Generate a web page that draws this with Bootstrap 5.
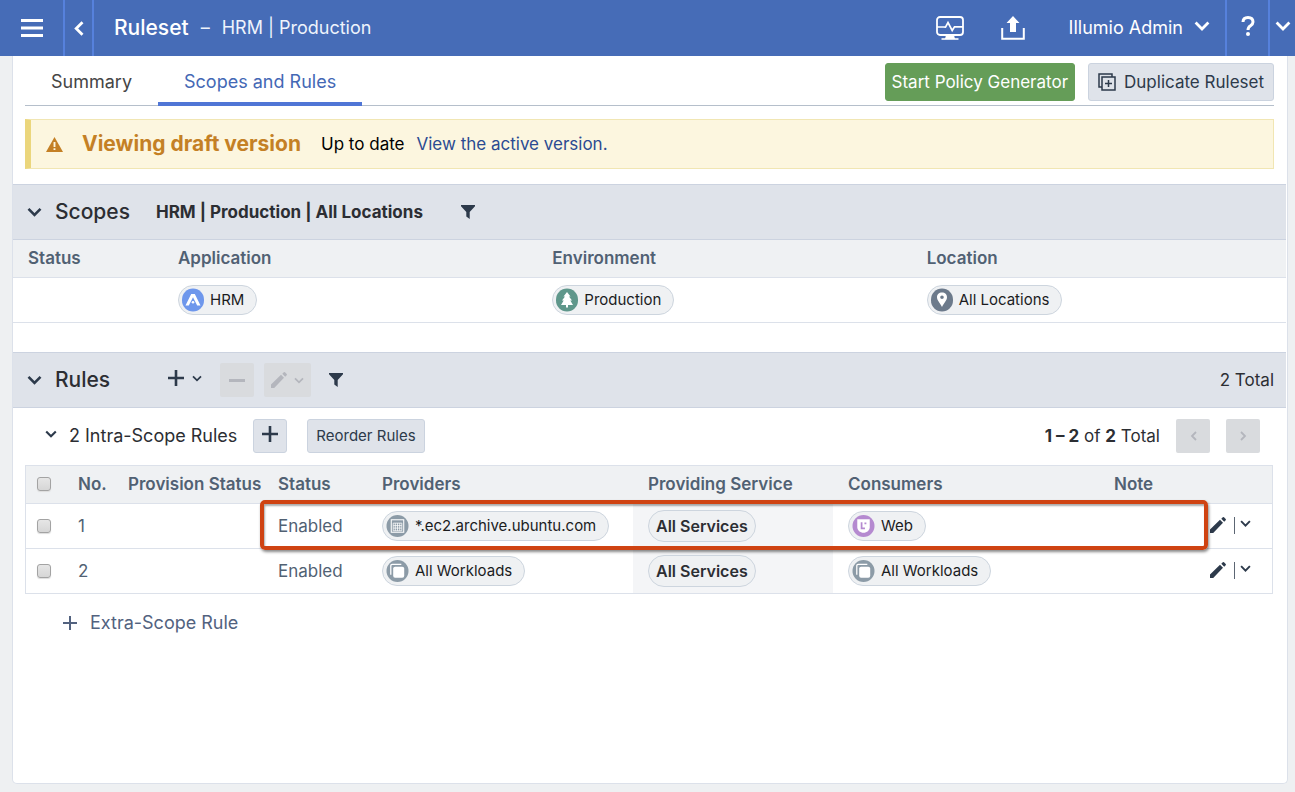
<!DOCTYPE html>
<html lang="en">
<head>
<meta charset="utf-8">
<meta name="viewport" content="width=device-width, initial-scale=1">
<title>Ruleset – HRM | Production</title>
<link href="https://cdn.jsdelivr.net/npm/bootstrap@5.3.0/dist/css/bootstrap.min.css" rel="stylesheet">
<style>
  :root { --ink: #2d3a4b; --slate: #516173; --line: #dce1ea; --bar: #dfe3ea; --soft: #eff1f3; --blue: #466cb7; }
  body { font-family: Inter, "Liberation Sans", sans-serif; font-size: 17px; line-height: 24px; color: #2c2e33; background: #eef0f2; }
  svg { display: block; flex: none; }
  .icon-btn { background: none; border: 0; padding: 0; display: flex; align-items: center; justify-content: center; color: var(--ink); }
  .topbar { background: var(--blue); height: 56px; color: #fff; }
  .topbar .icon-btn { color: #fff; }
  .topbar .cell-line { border-left: 2px solid #5681dc; }
  .menu-btn { width: 63px; }
  .back-btn { width: 29px; }
  .help-btn { width: 43px; }
  .more-btn { width: 27px; }
  .health-btn { margin-right: 37px; }
  .provision-btn { margin-right: 44px; }
  .user-btn { font-size: 18px; gap: 11px; margin-right: 15px; }
  .page-title { font-size: 21px; font-weight: 500; }
  .page-sub { font-size: 18px; color: #eef3fc; }
  .panel { background: #fff; border: 1px solid var(--line); border-top: 0; border-radius: 0 0 5px 5px; margin: 0 7px 8px 12px; min-height: calc(100vh - 64px); }
  .tabs-row { border-bottom: 1px solid #b5bfcb; height: 50px; margin: 0 13px 0 12px; }
  .tab-link { color: #454545; text-decoration: none; font-size: 18px; padding: 14px 26px 8px; height: 50px; border-bottom: 4px solid transparent; }
  .tab-link.on { color: #4468b5; border-color: #5076d6; }
  .act { height: 38px; border-radius: 3px; border: 1px solid #cbd3df; background: var(--bar); color: var(--ink); padding: 0 9px; }
  .act.go { background: #659d58; border-color: #659d58; color: #fff; padding: 0 6px; }
  .tab-actions { gap: 13px; padding-top: 7px; }
  .draft { height: 50px; margin: 13px 13px 15px 12px; background: #fcf6df; border: 1px solid #f1e6b3; border-left: 6px solid #ebd67c; padding: 0 15px; }
  .draft-title { font-size: 21px; font-weight: 700; color: #c48025; margin: 0 20px 0 19px; }
  .draft-link { color: #2b4b92; text-decoration: none; }
  .sect { padding-right: 1px; }
  .sect + .sect { margin-top: 29px; }
  .section-bar { height: 56px; background: var(--bar); border-top: 1px solid #ccd3e0; border-bottom: 1px solid #ccd3e0; padding: 0 12px 0 14px; }
  .section-title { font-size: 21px; font-weight: 500; margin: 0 26px 0 13px; line-height: 28px; }
  .scope-name { margin-right: 38px; }
  .add-btn { margin: 0 18px 4px 32px; }
  .icon-btn.off { background: #d9dbde; color: #b4b6bd; border-radius: 2px; height: 34px; min-width: 34px; }
  .edit-off { padding: 0 7px; gap: 7px; margin: 0 18px 0 10px; }
  .grid-table { table-layout: fixed; width: 100%; border-collapse: separate; border-spacing: 0; white-space: nowrap; color: var(--slate); }
  .grid-table th, .grid-table td { padding: 0 0 0 15px; border-bottom: 1px solid var(--line); vertical-align: middle; }
  .grid-table th { height: 38px; background: var(--soft); font-weight: 600; padding-bottom: 2px; }
  .grid-table td { height: 45px; }
  .boxed { border: 1px solid var(--line); border-bottom: 0; }
  .boxed th:first-child, .boxed td:first-child { padding-left: 11px; }
  .boxed td:last-child { padding: 0 0 2px 27px; }
  .boxed td.tint { background: #f4f5f7; }
  .pill { display: inline-flex; align-items: center; height: 30px; border: 1px solid #cdd5de; border-radius: 15px; background: var(--soft); color: #1b1c1e; font-size: 15px; padding: 0 12px 0 3px; gap: 6px; vertical-align: middle; }
  .pill.wide { height: 32px; border-radius: 16px; font-size: 16px; font-weight: 600; padding: 0 7px; color: #2c2e33; }
  .tick { appearance: none; display: block; width: 14px; height: 14px; margin: 0; border: 1px solid #a3a3a3; border-radius: 3px; background: linear-gradient(#e6e6e6, #d6d6d6); box-shadow: 0 1px 1px #ddd; }
  .tick:checked { background: var(--blue); }
  .sub-bar { height: 57px; padding: 0 26px 2px 32px; }
  .sub-title { font-size: 18px; font-weight: 400; margin: 0; }
  .small-act { height: 34px; font-size: 15px; padding: 0 8px; }
  .small-act + .small-act { margin-left: 20px; }
  .row-menu { height: 17px; padding-left: 5px; border-left: 1px solid #5c6673; }
  .callout { position: absolute; left: 235px; right: 65px; top: 35px; height: 50px; border: 4px solid #cf4312; border-radius: 5px; box-shadow: 1px 2px 3px #0007, inset 1px 2px 2px #0005; pointer-events: none; }
  .extra { color: #52627f; text-decoration: none; font-size: 18px; gap: 13px; margin: 17px 0 0 50px; }
</style>
</head>
<body>
<svg width="0" height="0" class="position-absolute" aria-hidden="true">
  <symbol id="chev" viewBox="0 0 16 10"><path d="M1.600 1.600 8 8l6.400-6.400" fill="none" stroke="currentColor" stroke-width="2.800"/></symbol>
  <symbol id="plus" viewBox="0 0 16 16"><path d="M8 0v16M0 8h16" fill="none" stroke="currentColor" stroke-width="2.600"/></symbol>
  <symbol id="funnel" viewBox="0 0 14 14"><path d="M0 0h14v1.200L8.700 7v7L5.300 11.500V7L0 1.200z" fill="currentColor"/></symbol>
  <symbol id="pencil" viewBox="0 0 16 16"><path d="M0 16v-3.400L10 2.800l3 3L3.200 16zM11.300 1.800l1.500-1.500q.6-.5 1.200 0L15.700 2q.5.600 0 1.200L14.200 4.700z" fill="currentColor"/></symbol>
  <symbol id="workloads" viewBox="0 0 24 24"><circle cx="12" cy="12" r="11.500" fill="#8c9ba7"/><path d="M5 16V6.500Q5 5 6.500 5H16" fill="none" stroke="#fff" stroke-width="1.300"/><rect x="7.500" y="7.500" width="11.500" height="11.500" rx="2" fill="#fff"/></symbol>
</svg>

<header class="topbar d-flex align-items-stretch">
  <button class="icon-btn menu-btn" aria-label="Menu"><svg width="22" height="18" viewBox="0 0 22 18"><path d="M0 1.500h22M0 9h22M0 16.500h22" stroke="#fff" stroke-width="3"/></svg></button>
  <button class="icon-btn cell-line back-btn" aria-label="Back"><svg width="10" height="15" viewBox="0 0 10 15"><path d="M8.500 1.200 2.200 7.500l6.300 6.300" fill="none" stroke="#fff" stroke-width="2.800"/></svg></button>
  <div class="cell-line d-flex align-items-center flex-grow-1 ps-3">
    <span class="page-title ms-1">Ruleset</span><span class="page-sub mx-2 px-1">–</span><span class="page-sub">HRM | Production</span>
  </div>
  <button class="icon-btn health-btn" aria-label="Health">
    <svg width="28" height="24" viewBox="0 0 28 24"><rect x="1" y="1" width="26" height="18" rx="3" fill="none" stroke="#fff" stroke-width="1.800"/><path d="M1 11h6.500l2 .2L12 6.500l4.200 8 2.300-3.700H27" fill="none" stroke="#fff" stroke-width="1.700"/><path d="M10 19h8l1 4H9z" fill="#fff"/><path d="M5.500 23h17" stroke="#fff" stroke-width="1.600"/></svg>
  </button>
  <button class="icon-btn provision-btn" aria-label="Provision">
    <svg width="24" height="24" viewBox="0 0 24 24"><path d="M12 0l6.500 7H15v9H9V7H5.500z" fill="#fff"/><path d="M1.200 12v10.700h21.600V12" fill="none" stroke="#fff" stroke-width="2"/></svg>
  </button>
  <button class="icon-btn user-btn">Illumio Admin<svg width="16" height="10" class="mb-1"><use href="#chev"/></svg></button>
  <button class="icon-btn cell-line help-btn" aria-label="Help"><svg width="14" height="20" viewBox="0 0 14 20" class="mb-1"><path d="M2 6Q2 1.500 7 1.500T12 6q0 2-2.500 3.700Q7 11.300 7 14" fill="none" stroke="#fff" stroke-width="3"/><circle cx="7" cy="18" r="2" fill="#fff"/></svg></button>
  <button class="icon-btn cell-line more-btn" aria-label="More"><svg width="16" height="10" class="mb-1"><use href="#chev"/></svg></button>
</header>

<main class="panel">
  <div class="tabs-row d-flex justify-content-between">
    <nav class="d-flex">
      <a class="tab-link" href="#">Summary</a>
      <a class="tab-link on" href="#">Scopes and Rules</a>
    </nav>
    <div class="tab-actions d-flex align-items-start">
      <button class="act go">Start Policy Generator</button>
      <button class="act d-flex align-items-center gap-2"><svg width="18" height="18" viewBox="0 0 18 18" fill="none" stroke="currentColor" stroke-width="1.500"><path d="M4 14H1V1h13v3"/><rect x="4" y="4" width="13" height="13"/><path d="M10.500 7v7M7 10.500h7"/></svg>Duplicate Ruleset</button>
    </div>
  </div>

  <div class="draft d-flex align-items-center">
    <svg width="17" height="15" viewBox="0 0 17 15"><path d="M8.500 0 17 15H0z" fill="#c48025"/><path d="M8.500 5v5M8.500 11.200v1.800" stroke="#fcf6df" stroke-width="1.900"/></svg>
    <strong class="draft-title">Viewing draft version</strong>
    <span class="text-black me-2 pe-1">Up to date</span>
    <a class="draft-link" href="#">View the active version.</a>
  </div>

  <section aria-labelledby="scopes-h" class="sect">
    <div class="section-bar d-flex align-items-center">
      <button class="icon-btn" aria-label="Collapse scopes"><svg width="15" height="10"><use href="#chev"/></svg></button>
      <h2 id="scopes-h" class="section-title">Scopes</h2>
      <strong class="scope-name">HRM | Production | All Locations</strong>
      <button class="icon-btn" aria-label="Filter scopes"><svg width="14" height="14"><use href="#funnel"/></svg></button>
    </div>
    <table class="grid-table">
      <colgroup><col style="width:150px"><col><col><col></colgroup>
      <thead><tr><th>Status</th><th>Application</th><th>Environment</th><th>Location</th></tr></thead>
      <tbody><tr>
        <td></td>
        <td><span class="pill"><svg width="22" height="24" viewBox="0 0 22 24"><rect y=".5" width="22" height="23" rx="11" fill="#6e97ec"/><path d="M3.500 17.500 9.200 6h3.600l5.700 11.500h-3.300L11 9.200 6.800 17.500z" fill="#fff"/><circle cx="11" cy="14.200" r="1.300" fill="#fff"/></svg>HRM</span></td>
        <td><span class="pill"><svg width="22" height="24" viewBox="0 0 22 24"><rect y=".5" width="22" height="23" rx="11" fill="#5f978b"/><path d="M11 4l3.500 4.500H13l3 4h-1.700L17 17h-5v2.500h-2V17H5l2.700-4.500H6l3-4H7.500z" fill="#fff"/></svg>Production</span></td>
        <td><span class="pill"><svg width="22" height="24" viewBox="0 0 22 24"><rect y=".5" width="22" height="23" rx="11" fill="#6c7a8b"/><path fill-rule="evenodd" d="M11 4.500c3 0 5 2 5 4.800 0 3.200-3.500 6.200-5 9.700-1.500-3.500-5-6.500-5-9.700 0-2.800 2-4.800 5-4.800zM11 7.500a1.800 1.800 0 1 0 0 3.600 1.800 1.800 0 0 0 0-3.600z" fill="#fff"/></svg>All Locations</span></td>
      </tr></tbody>
    </table>
  </section>

  <section aria-labelledby="rules-h" class="sect">
    <div class="section-bar d-flex align-items-center">
      <button class="icon-btn" aria-label="Collapse rules"><svg width="15" height="10"><use href="#chev"/></svg></button>
      <h2 id="rules-h" class="section-title">Rules</h2>
      <button class="icon-btn add-btn gap-2" aria-label="Add"><svg width="16" height="16"><use href="#plus"/></svg><svg width="10" height="7"><use href="#chev"/></svg></button>
      <button class="icon-btn off" disabled aria-label="Remove"><svg width="16" height="3"><rect width="16" height="3" fill="currentColor"/></svg></button>
      <button class="icon-btn off edit-off" disabled aria-label="Edit"><svg width="16" height="16"><use href="#pencil"/></svg><svg width="10" height="7"><use href="#chev"/></svg></button>
      <button class="icon-btn" aria-label="Filter rules"><svg width="14" height="14"><use href="#funnel"/></svg></button>
      <span class="ms-auto">2 Total</span>
    </div>

    <div class="sub-bar d-flex align-items-center">
      <button class="icon-btn mb-1" aria-label="Collapse intra-scope rules"><svg width="12" height="8"><use href="#chev"/></svg></button>
      <h3 class="sub-title ms-2 ps-1 me-3">2 Intra-Scope Rules</h3>
      <button class="act small-act" aria-label="Add rule"><svg width="16" height="16" class="mb-1"><use href="#plus"/></svg></button>
      <button class="act small-act">Reorder Rules</button>
      <span class="ms-auto me-3"><b>1 – 2</b> of <b>2</b> Total</span>
      <button class="icon-btn off me-3" disabled aria-label="Previous"><svg width="7" height="10" viewBox="0 0 7 10"><path d="M6 1 2 5l4 4" fill="none" stroke="currentColor" stroke-width="1.800"/></svg></button>
      <button class="icon-btn off" disabled aria-label="Next"><svg width="7" height="10" viewBox="0 0 7 10"><path d="M1 1l4 4-4 4" fill="none" stroke="currentColor" stroke-width="1.800"/></svg></button>
    </div>

    <div class="position-relative" style="margin:0 13px 0 12px">
      <table class="grid-table boxed">
        <colgroup><col style="width:37px"><col style="width:50px"><col style="width:150px"><col style="width:104px"><col><col style="width:200px"><col><col style="width:84px"><col style="width:89px"></colgroup>
        <thead><tr><th><input type="checkbox" class="tick" aria-label="Select all rules"></th><th>No.</th><th>Provision Status</th><th>Status</th><th>Providers</th><th>Providing Service</th><th>Consumers</th><th>Note</th><th></th></tr></thead>
        <tbody>
          <tr>
            <td><input type="checkbox" class="tick" aria-label="Select rule 1"></td><td>1</td><td></td><td>Enabled</td>
            <td><span class="pill"><svg width="23" height="24" viewBox="0 0 24 24"><circle cx="12" cy="12" r="11.500" fill="#8c9ba7"/><rect x="5.500" y="5.500" width="13" height="13" fill="none" stroke="#fff" stroke-width="1.100"/><path d="M7.500 9h9v8h-9zM7.500 11.600h9M7.500 14.200h9M9.700 9v8M12 9v8M14.300 9v8" fill="none" stroke="#fff" stroke-width=".8"/></svg>*.ec2.archive.ubuntu.com</span></td>
            <td class="tint"><span class="pill wide">All Services</span></td>
            <td><span class="pill"><svg width="23" height="24" viewBox="0 0 24 24"><circle cx="12" cy="12" r="11.500" fill="#b58ad0"/><path d="M5.500 5h13v8c0 3.500-3 6-6.500 6s-6.500-2.500-6.500-6z" fill="#fff"/><path d="M10 8v6.500h3.500M13 9.200h2" fill="none" stroke="#b58ad0" stroke-width="1.800"/></svg>Web</span></td>
            <td></td>
            <td><div class="d-flex align-items-center gap-2"><button class="icon-btn" aria-label="Edit rule 1"><svg width="16" height="16"><use href="#pencil"/></svg></button><button class="icon-btn row-menu" aria-label="Rule 1 menu"><svg width="11" height="7" class="mb-1"><use href="#chev"/></svg></button></div></td>
          </tr>
          <tr>
            <td><input type="checkbox" class="tick" aria-label="Select rule 2"></td><td>2</td><td></td><td>Enabled</td>
            <td><span class="pill"><svg width="23" height="24"><use href="#workloads"/></svg>All Workloads</span></td>
            <td class="tint"><span class="pill wide">All Services</span></td>
            <td><span class="pill"><svg width="23" height="24"><use href="#workloads"/></svg>All Workloads</span></td>
            <td></td>
            <td><div class="d-flex align-items-center gap-2"><button class="icon-btn" aria-label="Edit rule 2"><svg width="16" height="16"><use href="#pencil"/></svg></button><button class="icon-btn row-menu" aria-label="Rule 2 menu"><svg width="11" height="7" class="mb-1"><use href="#chev"/></svg></button></div></td>
          </tr>
        </tbody>
      </table>
      <div class="callout"></div>
    </div>

    <a class="extra d-inline-flex align-items-center" href="#"><svg width="14" height="14" viewBox="0 0 14 14"><path d="M7 0v14M0 7h14" stroke="currentColor" stroke-width="2"/></svg><span>Extra-Scope Rule</span></a>
  </section>
</main>
<script src="https://cdn.jsdelivr.net/npm/bootstrap@5.3.0/dist/js/bootstrap.bundle.min.js"></script>
</body>
</html>
